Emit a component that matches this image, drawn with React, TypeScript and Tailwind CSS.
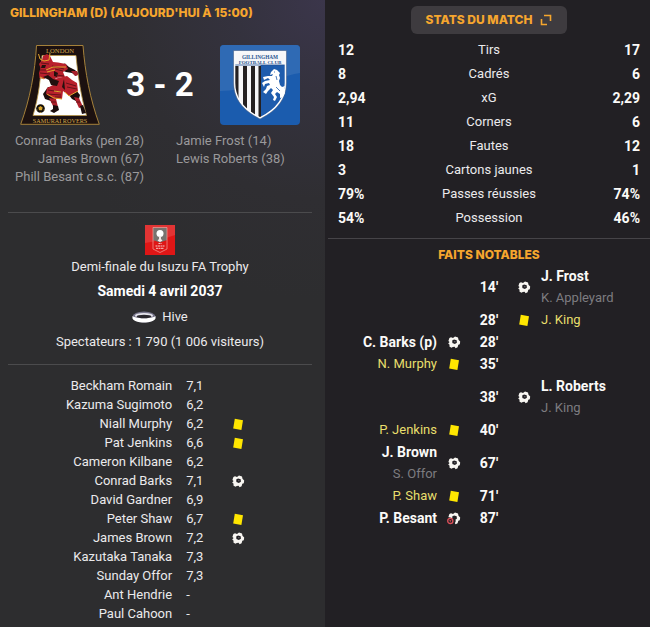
import React from "react";

type Mark = "goal" | "yellow" | "own";

type Player = { name: string; rating: string; mark?: Mark };

type MatchEvent = {
  minute: string;
  side: "home" | "away";
  mark: Mark;
  player: string;
  assist?: string;
};

const homeScorers = ["Conrad Barks (pen 28)", "James Brown (67)", "Phill Besant c.s.c. (87)"];
const awayScorers = ["Jamie Frost (14)", "Lewis Roberts (38)"];

const players: Player[] = [
  { name: "Beckham Romain", rating: "7,1" },
  { name: "Kazuma Sugimoto", rating: "6,2" },
  { name: "Niall Murphy", rating: "6,2", mark: "yellow" },
  { name: "Pat Jenkins", rating: "6,6", mark: "yellow" },
  { name: "Cameron Kilbane", rating: "6,2" },
  { name: "Conrad Barks", rating: "7,1", mark: "goal" },
  { name: "David Gardner", rating: "6,9" },
  { name: "Peter Shaw", rating: "6,7", mark: "yellow" },
  { name: "James Brown", rating: "7,2", mark: "goal" },
  { name: "Kazutaka Tanaka", rating: "7,3" },
  { name: "Sunday Offor", rating: "7,3" },
  { name: "Ant Hendrie", rating: "-" },
  { name: "Paul Cahoon", rating: "-" },
];

const stats: [string, string, string][] = [
  ["12", "Tirs", "17"],
  ["8", "Cadrés", "6"],
  ["2,94", "xG", "2,29"],
  ["11", "Corners", "6"],
  ["18", "Fautes", "12"],
  ["3", "Cartons jaunes", "1"],
  ["79%", "Passes réussies", "74%"],
  ["54%", "Possession", "46%"],
];

const events: MatchEvent[] = [
  { minute: "14'", side: "away", mark: "goal", player: "J. Frost", assist: "K. Appleyard" },
  { minute: "28'", side: "away", mark: "yellow", player: "J. King" },
  { minute: "28'", side: "home", mark: "goal", player: "C. Barks (p)" },
  { minute: "35'", side: "home", mark: "yellow", player: "N. Murphy" },
  { minute: "38'", side: "away", mark: "goal", player: "L. Roberts", assist: "J. King" },
  { minute: "40'", side: "home", mark: "yellow", player: "P. Jenkins" },
  { minute: "67'", side: "home", mark: "goal", player: "J. Brown", assist: "S. Offor" },
  { minute: "71'", side: "home", mark: "yellow", player: "P. Shaw" },
  { minute: "87'", side: "home", mark: "own", player: "P. Besant" },
];

function MarkIcon({ mark }: { mark: Mark }) {
  if (mark === "yellow") {
    return (
      <svg className="block size-4" viewBox="0 0 16 16" aria-hidden="true">
        <path d="M4.800 2.800 L13 4.200 L11.400 14 L3.200 12.600 Z" fill="#ffe600" />
      </svg>
    );
  }
  return (
    <svg className="block size-4" viewBox="0 0 16 16" aria-hidden="true">
      <path
        d="M5 3.200 L7 4 L9 2.400 L12 3.600 L12.500 5.800 L14.200 7.600 L13.800 10.200 L12.300 10.800 L11.600 13.200 L9.600 14.200 L8.600 12.800 L6.800 12.900 L5.400 13.800 L3.400 12.500 L3.600 10.800 L2.200 9.400 L3.600 8 L2.400 7 L3.400 3.900 Z"
        fill="#f8f6f2"
      />
      <path d="M8 5.400 L10.700 6.200 L10.900 8.800 L8.800 10 L6.400 9 L6.200 6.600 Z" fill="#232125" />
      {mark === "goal" && <path d="M8.200 7 h1.200 v1.200 h-1.200 z" fill="#6b696e" />}
      {mark === "own" && (
        <g>
          <path d="M6 8 L9 8.400 L9.800 11 L8.600 14 L2 14.500 L0 10 L3 7.200 Z" fill="#232125" />
          <circle cx="4.300" cy="10.900" r="2.600" fill="none" stroke="#e0505a" strokeWidth="1.300" />
          <path d="M3.100 10.300 h2.400 l-1.200 1.700 z" fill="#e0505a" />
        </g>
      )}
    </svg>
  );
}

function LondonCrest() {
  return (
    <svg className="block size-20" viewBox="0 0 80 80" role="img" aria-label="London Samurai Rovers">
      <path d="M16.500 0.500 H63 C65 27 70 54 79.300 79.300 H0.700 C10 54 15 27 16.500 0.500 Z" fill="#1c1110" stroke="#a5813a" strokeWidth="1" />
      <path d="M22 10.500 H56 C58 32 61 51 66.500 70.500 H13 C19 51 21 31 22 10.500 Z" fill="#fff" stroke="#b89445" strokeWidth="0.800" />
      <text x="40" y="7.800" textAnchor="middle" fontSize="6.600" fill="#d3a94c" fontFamily="Liberation Serif, serif">LONDON</text>
      <text x="40" y="77.500" textAnchor="middle" fontSize="6.200" fill="#d3a94c" fontFamily="Liberation Serif, serif">SAMURAI ROVERS</text>
      <g strokeLinejoin="round">
        <path d="M40 20 L45 18.500 L49 22 L55 25 L58 28 L56 31 L52 28 L46 27 L41 25 Z" fill="#1b0d0d" />
        <path d="M51 26 L57 26 L58 30 L55 31 Z" fill="#a9202b" />
        <path d="M28 42 L23 49 L25 54 L31 56 L40 50 L42 44 Z" fill="#1b0d0d" />
        <path d="M46 46 L56 45 L60 50 L58 57 L52 54 Z" fill="#1b0d0d" />
        <path d="M29 53 L36 54 L38 62 L34 63 Z" fill="#ad202b" />
        <path d="M33 60 L38 61 L39 65 L34 68 L30 66 L33 64 Z" fill="#1b0d0d" />
        <path d="M54 52 L59 53 L63 62 L59 63 Z" fill="#ad202b" />
        <path d="M60 61 L63 60 L66 68 L62 69 Z" fill="#1b0d0d" />
        <path d="M22 15 L19 19 L20.500 23 L19 28 L19.500 33 L24 34 L28 32 L33 36 L36 33 L45 32 L43 27 L48 24 L46 19 L38 17.500 L33 17 L30 11 L27 9 L23 11 Z" fill="#b9202c" />
        <path d="M34 34 L47 31 L52 35 L57 38 L58 46 L49 51 L43 46 L42 54 L34 54 L26 49 L27 43 L33 40 Z" fill="#b9202c" />
        <path d="M23 32 L28 30 L33 34 L39 36 L37 41 L31 40 L29 35 Z" fill="#22100e" />
        <path d="M34 26 L38 28 L37 32 L34 31 Z M22 20 L26 20 L25 23 L21 23 Z M44 34 L45 45 L42 42 Z" fill="#22100e" />
        <path d="M21 18 l8 1 M20 25 h7 M20 28 l10 1 M32 21 l12 3 M35 24 l8 2 M36 30 l8 1 M28 45 l13 2 M27 49 l14 1 M46 38 l10 3 M47 42 l10 2 M35 52 h6 M31 57 h5 M56 57 h4" fill="none" stroke="#651219" strokeWidth="1" />
        <path d="M18.500 9 L20 14 L24 16 L29 15 L30 8 M26 25 L33 22 L46 22 M27 27 L35 25 M24 34 L20 32 M27 49 L34 53 L42 54 M45 47 L49 51 L58 46 M34 46 l7 1" fill="none" stroke="#e1a42e" strokeWidth="1" />
      </g>
      <circle cx="20.500" cy="63.500" r="4.300" fill="#14100c" />
      <path d="M20.500 61 l2.200 1.600 -0.800 2.600 h-2.800 l-0.800 -2.600 z" fill="#d9a52b" />
      <path d="M17 61 l1 -1 M24 61 l-1 -1 M20.500 67 v1 M16.500 65 h1 M24.500 65 h-1" stroke="#d9a52b" strokeWidth="0.700" />
    </svg>
  );
}

function GillinghamCrest() {
  const shield = "M14.500 6.500 H65.500 V38 C65.500 56 53 66.500 40 73 C27 66.500 14.500 56 14.500 38 Z";
  return (
    <svg className="block size-20 rounded-sm" viewBox="0 0 80 80" role="img" aria-label="Gillingham Football Club">
      <defs>
        <clipPath id="shield">
          <path d={shield} />
        </clipPath>
      </defs>
      <rect width="80" height="80" fill="#1b5cae" />
      <path d="M0 0 H80 V28 C55 32 30 46 0 46 Z" fill="#2f6ab4" />
      <g clipPath="url(#shield)">
        <rect x="14" y="6" width="52" height="68" fill="#f6f6f8" />
        <rect x="40.500" y="20" width="26" height="54" fill="#1e5cad" />
        <path d="M15 21 h3.500 v53 h-3.500z M23 21 h4 v53 h-4z M31 21 h4 v53 h-4z M38.500 21 h2.500 v53 h-2.500z" fill="#242021" />
        <path d="M14 20 H66" stroke="#1e4f93" strokeWidth="0.800" />
      </g>
      <path d={shield} fill="none" stroke="#fff" strokeWidth="1.600" />
      <path d="M13.600 5.600 H66.400 V38 C66.400 57 53 67.500 40 74 C27 67.500 13.600 57 13.600 38 Z" fill="none" stroke="#5d6c89" strokeWidth="0.600" />
      <text x="40" y="13.600" textAnchor="middle" fontSize="5.300" fontWeight="700" fill="#285591" fontFamily="Liberation Serif, serif">GILLINGHAM</text>
      <text x="40" y="19" textAnchor="middle" fontSize="5" fontWeight="700" fill="#285591" fontFamily="Liberation Serif, serif">FOOTBALL CLUB</text>
      <path
        d="M54 24 L57 25 L60 28 L59 30 L60 33 L59 36 L60 40 L62 42 L65 41 L64 45 L65 48 L63 52 L60 53 L60 49 L57 47 L55 49 L57 52 L55 56 L53 55 L54 52 L51 48 L53 45 L51 43 L48 46 L46 49 L43 47 L46 44 L47 41 L50 40 L49 38 L45 39 L44 42 L42 38 L45 36 L50 35 L48 33 L44 35 L43 32 L48 31 L52 31 L53 29 L50 30 L51 27 Z"
        fill="#fff"
      />
      <path d="M56 42 L60 46 M56 31 L57 35 M54 27 h1" stroke="#1e5cad" strokeWidth="0.800" fill="none" />
    </svg>
  );
}

function TrophyLogo() {
  return (
    <svg className="block size-[30px]" viewBox="0 0 30 30" aria-hidden="true">
      <rect width="30" height="30" fill="#df1616" />
      <path d="M0 0 H30 V10 C20 13 10 17 0 18 Z" fill="#e23434" />
      <path d="M8 2.500 H22 V15 L15 17.500 L8 15 Z" fill="#77736f" />
      <path d="M8 2.500 H22 V24 L15 27.500 L8 24 Z" fill="none" stroke="#efa09c" strokeWidth="0.700" />
      <circle cx="15" cy="8.500" r="3.500" fill="#fff" />
      <path d="M14 11 h2 v3 l1.500 1.500 -2.500 1.500 -2.500 -1.500 1.500 -1.500z" fill="#f4e9e8" />
      <path d="M13.500 18.500 h3 M10.500 21 h9 M11 23.300 h8" stroke="#f9c8c6" strokeWidth="1" strokeDasharray="2 0.500" />
    </svg>
  );
}

function StadiumIcon() {
  return (
    <svg className="block h-3 w-6" viewBox="0 0 24 12" aria-hidden="true">
      <ellipse cx="12" cy="6" rx="11.500" ry="5.500" fill="#77758b" />
      <path d="M0.500 5 C3 8 21 8 23.500 5 V7.500 C21 12.800 3 12.800 0.500 7.500 Z" fill="#fff" />
      <ellipse cx="12" cy="4.700" rx="9" ry="2.700" fill="#e7e6ee" />
      <ellipse cx="12" cy="5.500" rx="7.500" ry="1.700" fill="#29272d" />
    </svg>
  );
}

function EventNames({ event }: { event: MatchEvent }) {
  return (
    <div className={event.side === "home" ? "text-right" : "text-left"}>
      <p className={event.mark === "yellow" ? "text-[#e8df6c]" : "text-sm leading-[22px] font-bold text-[#fbfaf8]"}>
        {event.player}
      </p>
      {event.assist && <p className="text-[#7d7c80]">{event.assist}</p>}
    </div>
  );
}

export default function App() {
  return (
    <main className="grid min-h-screen grid-cols-2 bg-[#222024] font-[Roboto,'Liberation_Sans',sans-serif] text-[13px] text-[#ebeaec]">
      <section className="bg-[#2d2d2f] bg-[radial-gradient(circle_at_top_right,#3b364b_0px,#34323e_90px,#2f2e32_200px,#2d2d2f_300px)] pr-[13px] pl-2">
        <h1 className="px-0.5 pt-1 font-[Inter,sans-serif] text-xs leading-[18px] font-extrabold text-[#f6a62e]">
          GILLINGHAM (D) (AUJOURD'HUI À 15:00)
        </h1>

        <div className="mt-[23px] flex items-center justify-between px-3">
          <LondonCrest />
          <p className="text-[33px] leading-10 font-bold text-white">3 - 2</p>
          <GillinghamCrest />
        </div>

        <div className="mt-[7px] grid grid-cols-2 gap-8 leading-[18px] text-[#9a999b]">
          <ul className="text-right whitespace-nowrap">
            {homeScorers.map((s) => (
              <li key={s}>{s}</li>
            ))}
          </ul>
          <ul className="whitespace-nowrap">
            {awayScorers.map((s) => (
              <li key={s}>{s}</li>
            ))}
          </ul>
        </div>

        <div className="mt-[26px] flex flex-col items-center border-y border-[#4b4b4d] pt-3 pb-3">
          <TrophyLogo />
          <p className="mt-0.5 leading-5">Demi-finale du Isuzu FA Trophy</p>
          <p className="mt-1 text-sm leading-5 font-bold text-white">Samedi 4 avril 2037</p>
          <p className="mt-1.5 flex items-center gap-1.5 leading-5">
            <StadiumIcon />
            Hive
          </p>
          <p className="mt-[5px] leading-5">Spectateurs : 1 790 (1 006 visiteurs)</p>
        </div>

        <table className="mt-[11px] w-full table-fixed">
          <tbody>
            {players.map((p) => (
              <tr key={p.name} className="h-[19px] leading-[19px]">
                <th scope="row" className="w-[54%] p-0 text-right font-normal">{p.name}</th>
                <td className="w-[15%] p-0 pl-3.5">{p.rating}</td>
                <td className="p-0 pt-px pl-3">{p.mark && <MarkIcon mark={p.mark} />}</td>
              </tr>
            ))}
          </tbody>
        </table>
      </section>

      <section className="pl-[3px]">
        <div className="flex justify-center pt-1.5">
          <button
            type="button"
            className="flex h-7 items-center gap-2 rounded-md bg-[#3e3b3f] px-[15px] font-[Inter,sans-serif] text-xs font-extrabold text-[#f6a62e]"
          >
            STATS DU MATCH
            <svg className="block size-3" viewBox="0 0 12 12" fill="none" stroke="#f6a62e" strokeWidth="1.600" aria-hidden="true">
              <path d="M4 1.500 H10.500 V7 M1.500 5 V10.500 H7" />
            </svg>
          </button>
        </div>

        <div className="border-b border-[#464448] px-2.5 pt-1 pb-2">
          <table className="w-full table-fixed">
            <tbody>
              {stats.map(([home, label, away]) => (
                <tr key={label} className="h-6 leading-6">
                  <td className="w-1/4 p-0 text-sm leading-6 font-bold text-[#fbfaf8]">{home}</td>
                  <th scope="row" className="p-0 text-center font-normal">{label}</th>
                  <td className="w-1/4 p-0 text-right text-sm leading-6 font-bold text-[#fbfaf8]">{away}</td>
                </tr>
              ))}
            </tbody>
          </table>
        </div>

        <h2 className="pt-[7px] text-center font-[Inter,sans-serif] text-xs leading-[18px] font-extrabold text-[#f6a62e]">
          FAITS NOTABLES
        </h2>
        <ul className="mt-px leading-[22px]">
          {events.map((e) => (
            <li key={e.minute + e.player} className="grid grid-cols-[1fr_34px_36px_34px_1fr] items-center">
              <div>{e.side === "home" && <EventNames event={e} />}</div>
              <div className="flex justify-center">{e.side === "home" && <MarkIcon mark={e.mark} />}</div>
              <p className="text-center text-sm leading-[22px] font-bold text-[#fbfaf8]">{e.minute}</p>
              <div className="flex justify-center">{e.side === "away" && <MarkIcon mark={e.mark} />}</div>
              <div>{e.side === "away" && <EventNames event={e} />}</div>
            </li>
          ))}
        </ul>
      </section>
    </main>
  );
}
